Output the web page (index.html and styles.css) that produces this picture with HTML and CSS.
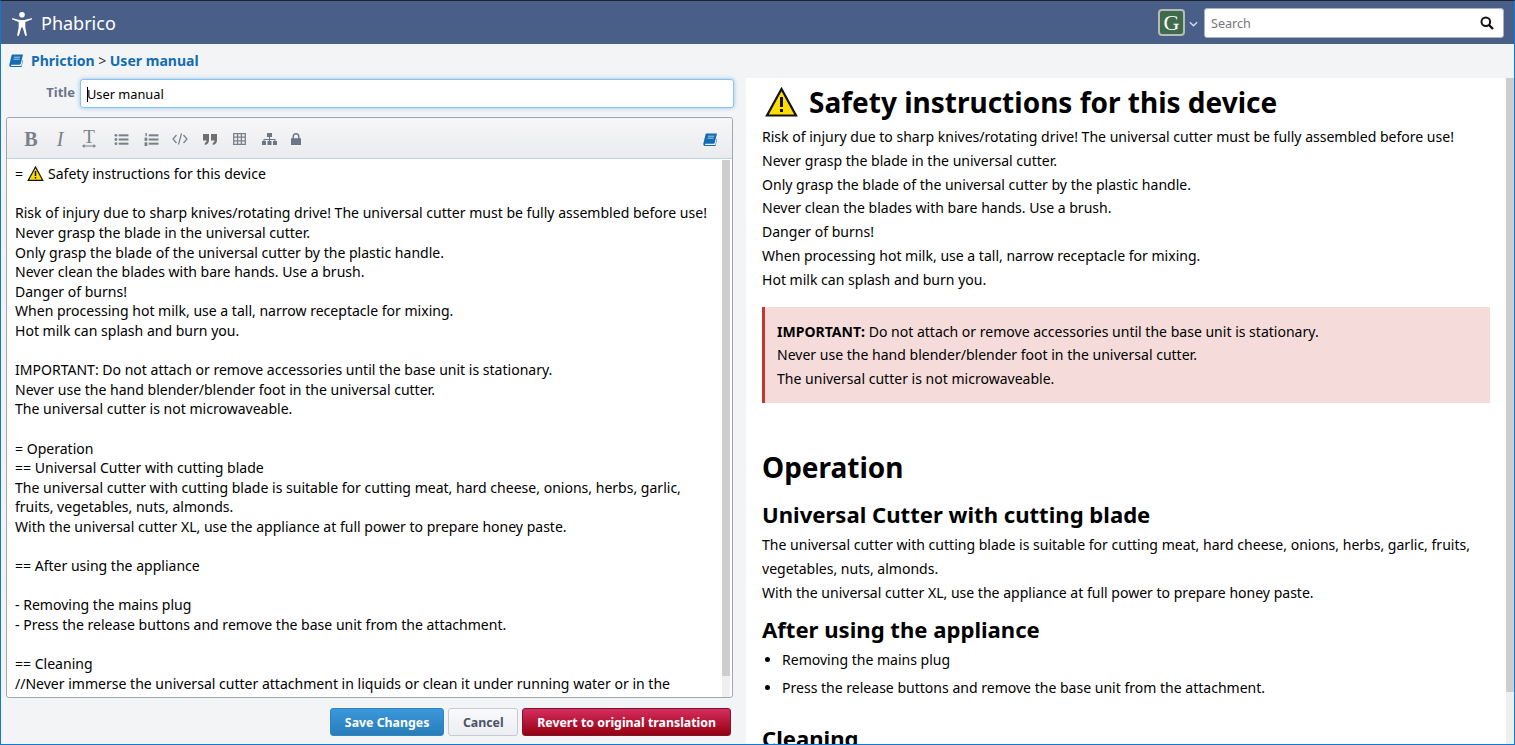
FILE: index.html
```html
<!DOCTYPE html>
<html lang="en">
<head>
  <meta charset="UTF-8">
  <title>Edit User manual</title>
  <link rel="stylesheet" href="styles.css">
</head>
<body>
  <div class="window">
    <!-- Top bar -->
    <header class="topbar">
      <a class="brand">
        <svg class="brand-icon" viewBox="0 0 20 24" width="20" height="24"><circle cx="10" cy="2.800" r="2.800" fill="#fff"/><path d="M.8 6.200c-.9-.3-1.300 1-.4 1.400L6.700 10v5l-1.500 8c-.2 1.100 1.500 1.400 1.800.3L9.300 15.500h1.400l2.300 7.800c.3 1.100 2 .8 1.800-.3l-1.500-8v-5l6.300-2.400c.9-.4.5-1.700-.4-1.400L12.500 8h-5z" fill="#fff"/></svg>
        <span>Phabrico</span>
      </a>
      <div class="topbar-right">
        <div class="avatar">G</div>
        <svg class="caret" viewBox="0 0 10 6" width="9" height="6"><path d="M1 1l4 4 4-4" fill="none" stroke="#d5ddea" stroke-width="1.500"/></svg>
        <div class="search">
          <span class="search-text">Search</span>
          <svg viewBox="0 0 14 14" width="14" height="14"><circle cx="5.800" cy="5.800" r="4.300" fill="none" stroke="#111" stroke-width="2"/><path d="M9 9l4 4" stroke="#111" stroke-width="2.400"/></svg>
        </div>
      </div>
    </header>

    <!-- Breadcrumbs -->
    <nav class="crumbs">
      <svg viewBox="0 0 14 13" width="14" height="13"><path d="M3.500 .5h10c.4 0 .5.300.4.600l-2.200 8.700c-.2.600-.5.900-1.100.9H2.800c-.8 0-1 .6-.9.900.1.300.5.500.9.500h9.500l1.500-6.500.4.400-1.700 7.100c-.1.300-.3.400-.6.400H2.500C1.200 12.900.2 12 .3 10.700L2.600 1.300c.1-.5.500-.8.900-.8z" fill="#136cb2"/><path d="M5 3.200h6.200M4.500 5.200h6.200" stroke="#cfe3f3" stroke-width=".8"/></svg>
      <a>Phriction</a><span class="sep">&gt;</span><a>User manual</a>
    </nav>

    <main class="columns">
      <!-- Editor side -->
      <section class="edit-side">
        <div class="title-row">
          <label class="title-label">Title</label>
          <div class="title-input"><span class="cursor"></span>User manual</div>
        </div>
        <div class="editor">
          <div class="toolbar">
            <span class="tool tool-b">B</span>
            <span class="tool tool-i">I</span>
            <span class="tool-t">
              <span class="tool tool-t-glyph">T</span>
              <svg viewBox="0 0 14 4" width="14" height="4"><path d="M0 2l2.500-2v1.400h9V0L14 2l-2.500 2V2.600h-9V4z" fill="#7b7f88"/></svg>
            </span>
            <svg class="tool-svg" viewBox="0 0 15 14" width="15" height="13"><g fill="#7b7f88"><circle cx="1.500" cy="2.500" r="1.500"/><circle cx="1.500" cy="7" r="1.500"/><circle cx="1.500" cy="11.500" r="1.500"/><rect x="4.500" y="1.400" width="10.500" height="2.200"/><rect x="4.500" y="5.900" width="10.500" height="2.200"/><rect x="4.500" y="10.400" width="10.500" height="2.200"/></g></svg>
            <svg class="tool-svg" viewBox="0 0 15 14" width="15" height="13"><g fill="#7b7f88"><rect x="1" y="0" width="1.500" height="3.500"/><rect x="0" y="5" width="3" height="3.500"/><rect x="0" y="10" width="3" height="4"/><rect x="4.500" y="1.400" width="10.500" height="2.200"/><rect x="4.500" y="5.900" width="10.500" height="2.200"/><rect x="4.500" y="10.400" width="10.500" height="2.200"/></g></svg>
            <svg class="tool-svg tool-code" viewBox="0 0 16 12" width="16" height="12"><path d="M4.500 2L1 6l3.500 4M11.500 2L15 6l-3.500 4M9.500.5L6.500 11.500" fill="none" stroke="#7b7f88" stroke-width="1.200"/></svg>
            <svg class="tool-svg tool-wide" viewBox="0 0 14 11" width="14" height="11"><path d="M0 0h6v6.200C6 9 4.300 10.600 1.800 10.900V8.800c1.100-.2 1.700-.9 1.700-2.300H0zM8 0h6v6.200c0 2.800-1.700 4.400-4.200 4.700V8.800c1.100-.2 1.700-.9 1.700-2.300H8z" fill="#6f6f72"/></svg>
            <svg class="tool-svg tool-wide" viewBox="0 0 13 12" width="13" height="12"><path d="M.7.700h11.600v10.600H.7zM.7 4.200h11.600M.7 7.800h11.600M4.600.7v10.600M8.400.7v10.600" fill="none" stroke="#7b7f88" stroke-width="1.300"/></svg>
            <svg class="tool-svg tool-org" viewBox="0 0 15 12" width="15" height="12"><g fill="#6d7684"><rect x="5" y="0" width="5" height="4"/><rect x="0" y="8" width="4" height="4"/><rect x="5.500" y="8" width="4" height="4"/><rect x="11" y="8" width="4" height="4"/><path d="M7 4h1v2h5.500v2h-1V7H8v1H7V7H2.500v1h-1V6H7z"/></g></svg>
            <svg class="tool-svg" viewBox="0 0 10 12" width="10" height="12"><path d="M0 5.200h1.500V3.500C1.500 1.500 3 0 5 0s3.500 1.500 3.500 3.500v1.700H10V12H0zM3 5.200h4V3.500C7 2.400 6.100 1.500 5 1.500S3 2.400 3 3.500z" fill="#6d7684"/></svg>
            <svg class="tool-help" viewBox="0 0 14 13" width="14" height="13"><path d="M3.500 .5h10c.4 0 .5.300.4.600l-2.200 8.700c-.2.600-.5.900-1.100.9H2.800c-.8 0-1 .6-.9.900.1.300.5.500.9.500h9.500l1.500-6.500.4.400-1.700 7.100c-.1.300-.3.400-.6.400H2.500C1.200 12.900.2 12 .3 10.700L2.600 1.300c.1-.5.500-.8.900-.8z" fill="#136cb2"/><path d="M5 3.200h6.200M4.500 5.200h6.200" stroke="#cfe3f3" stroke-width=".8"/></svg>
          </div>
          <div class="source-wrap">
            <div class="source">
              <div class="source-head"><span>=</span><svg class="warn-small" viewBox="0 0 32 30" width="17" height="15"><path d="M16 2L1.500 28.500h29z" fill="#ffdd00" stroke="#111" stroke-width="2.500" stroke-linejoin="miter"/><rect x="14.500" y="10" width="3" height="10" fill="#111"/><rect x="14.500" y="22" width="3" height="3" fill="#111"/></svg><span>Safety instructions for this device</span></div>
              <div class="source-text">
Risk of injury due to sharp knives/rotating drive! The universal cutter must be fully assembled before use!
Never grasp the blade in the universal cutter.
Only grasp the blade of the universal cutter by the plastic handle.
Never clean the blades with bare hands. Use a brush.
Danger of burns!
When processing hot milk, use a tall, narrow receptacle for mixing.
Hot milk can splash and burn you.

IMPORTANT: Do not attach or remove accessories until the base unit is stationary.
Never use the hand blender/blender foot in the universal cutter.
The universal cutter is not microwaveable.

= Operation
== Universal Cutter with cutting blade
The universal cutter with cutting blade is suitable for cutting meat, hard cheese, onions, herbs, garlic, fruits, vegetables, nuts, almonds.
With the universal cutter XL, use the appliance at full power to prepare honey paste.

== After using the appliance

- Removing the mains plug
- Press the release buttons and remove the base unit from the attachment.

== Cleaning
//Never immerse the universal cutter attachment in liquids or clean it under running water or in the</div>
            </div>
            <div class="scrollbar"><div class="thumb thumb-source"></div></div>
          </div>
        </div>
        <div class="actions">
          <button class="btn btn-blue">Save Changes</button>
          <button class="btn btn-grey">Cancel</button>
          <button class="btn btn-red">Revert to original translation</button>
        </div>
      </section>

      <!-- Preview side -->
      <section class="preview">
        <div class="preview-body">
          <h1 class="h-first"><svg class="warn-big" viewBox="0 0 32 30" width="33" height="30"><path d="M16 2L1.500 28.500h29z" fill="#ffdd00" stroke="#111" stroke-width="2.200" stroke-linejoin="miter"/><rect x="14.500" y="10" width="3" height="10" fill="#111"/><rect x="14.500" y="22" width="3" height="3" fill="#111"/></svg>Safety instructions for this device</h1>
          <p>Risk of injury due to sharp knives/rotating drive! The universal cutter must be fully assembled before use!<br>Never grasp the blade in the universal cutter.<br>Only grasp the blade of the universal cutter by the plastic handle.<br>Never clean the blades with bare hands. Use a brush.<br>Danger of burns!<br>When processing hot milk, use a tall, narrow receptacle for mixing.<br>Hot milk can splash and burn you.</p>
          <div class="notice"><b>IMPORTANT:</b> Do not attach or remove accessories until the base unit is stationary.<br>Never use the hand blender/blender foot in the universal cutter.<br>The universal cutter is not microwaveable.</div>
          <h1 class="h-op">Operation</h1>
          <h2 class="h-cutter">Universal Cutter with cutting blade</h2>
          <p>The universal cutter with cutting blade is suitable for cutting meat, hard cheese, onions, herbs, garlic, fruits, vegetables, nuts, almonds.<br>With the universal cutter XL, use the appliance at full power to prepare honey paste.</p>
          <h2 class="h-after">After using the appliance</h2>
          <ul>
            <li>Removing the mains plug</li>
            <li>Press the release buttons and remove the base unit from the attachment.</li>
          </ul>
          <h2 class="h-clean">Cleaning</h2>
        </div>
        <div class="scrollbar"><div class="thumb thumb-preview"></div></div>
      </section>
    </main>
  </div>
</body>
</html>
```
FILE: styles.css
```css
html, body {
  margin: 0;
  padding: 0;
  height: 100%;
  overflow: hidden;
}
body {
  font-family: "Noto Sans", sans-serif;
  font-size: 14.04px;
  color: #000;
}
.window {
  height: 100vh;
  box-sizing: border-box;
  display: flex;
  flex-direction: column;
  border: 1px solid #0f7ad6;
  border-top: 1px solid #1c2330;
  background: #f3f4f6;
}
.topbar {
  height: 43px;
  flex: none;
  display: flex;
  align-items: center;
  justify-content: space-between;
  background: #4a5f88;
}
.brand {
  display: flex;
  align-items: center;
  color: #fff;
  font-size: 18px;
  padding-left: 11px;
}
.brand-icon {
  margin: 3px 9px 0 0;
}
.topbar-right {
  display: flex;
  align-items: center;
  margin-right: 10px;
}
.avatar {
  width: 27px;
  height: 27px;
  box-sizing: border-box;
  border: 2px solid #b5bcb5;
  border-radius: 4px;
  background: #3f6b4c;
  color: #fff;
  font-family: "Liberation Serif", serif;
  font-size: 22px;
  line-height: 23px;
  text-align: center;
}
.caret {
  margin: 2px 6px 0 4px;
}
.search {
  width: 300px;
  height: 30px;
  box-sizing: border-box;
  display: flex;
  align-items: center;
  justify-content: space-between;
  padding: 0 9px 0 6px;
  background: #fff;
  border: 1px solid #a9b4c4;
  border-radius: 3px;
}
.search-text {
  padding-top: 2px;
  font-size: 12.6px;
  color: #777;
}
.crumbs {
  height: 33px;
  padding-bottom: 1px;
  flex: none;
  display: flex;
  align-items: center;
  padding-left: 8px;
  font-weight: bold;
  color: #136cb2;
}
.crumbs svg {
  margin-right: 8px;
}
.sep {
  font-weight: normal;
  color: #333;
  margin: 0 3.5px;
}
.columns {
  flex: 1;
  min-height: 0;
  display: flex;
}
.edit-side {
  width: 745px;
  flex: none;
  padding: 0 13px 0 5px;
  box-sizing: border-box;
  display: flex;
  flex-direction: column;
}
.title-row {
  display: flex;
  align-items: center;
  height: 31px;
  flex: none;
  margin-right: -1px;
}
.title-label {
  width: 69px;
  margin-top: -3px;
  text-align: right;
  font-size: 13px;
  font-weight: bold;
  color: #6b748c;
}
.title-input {
  flex: 1;
  margin-left: 5px;
  height: 29px;
  box-sizing: border-box;
  line-height: 28px;
  padding-left: 6px;
  font-size: 12.8px;
  background: #fff;
  border: 1px solid #8cc2ee;
  border-radius: 3px;
  box-shadow: 0 0 4px rgba(82, 168, 236, .6);
}
.cursor {
  display: inline-block;
  width: 1px;
  height: 15px;
  margin-right: -1px;
  background: #000;
  vertical-align: -3px;
}
.editor {
  height: 581px;
  flex: none;
  margin-top: 8px;
  box-sizing: border-box;
  display: flex;
  flex-direction: column;
  border: 1px solid #a1a6b0;
  border-radius: 3px;
  background: #fff;
}
.toolbar {
  height: 41px;
  flex: none;
  box-sizing: border-box;
  display: flex;
  align-items: center;
  padding: 2px 15px 0 17px;
  background: linear-gradient(#f7f7f9, #eaebee);
  border-bottom: 1px solid #b8d4ea;
  border-radius: 3px 3px 0 0;
}
.tool {
  font-family: "Liberation Serif", serif;
  font-size: 20px;
  line-height: 20px;
  text-align: center;
  color: #7b7f88;
}
.tool-b {
  width: 14px;
  margin-right: 15px;
  font-weight: bold;
}
.tool-i {
  width: 14px;
  margin-right: 15px;
  font-style: italic;
}
.tool-t {
  width: 14px;
  margin-right: 18px;
  display: flex;
  flex-direction: column;
  align-items: center;
}
.tool-t-glyph {
  height: 13px;
  line-height: 14px;
  font-size: 19px;
  margin-bottom: 1px;
}
.tool-svg {
  margin-right: 15px;
}
.tool-code {
  margin-left: -2px;
}
.tool-wide {
  margin-right: 16px;
}
.tool-org {
  margin-right: 14px;
}
.tool-help {
  margin-left: auto;
}
.source-wrap {
  flex: 1;
  min-height: 0;
  display: flex;
  padding: 1px 2px 0 0;
}
.source {
  flex: 1;
  min-width: 0;
  overflow: hidden;
  box-sizing: border-box;
  padding: 4.2px 12px 0 8px;
  line-height: 19.600px;
}
.source-head {
  display: flex;
  align-items: center;
  height: 19.600px;
}
.source-text {
  white-space: pre-wrap;
}
.warn-small {
  margin: 0 4px;
}
.scrollbar {
  width: 8px;
  flex: none;
  background: #efefef;
}
.thumb {
  background: #cdcdcd;
}
.thumb-source {
  height: 516px;
}
.thumb-preview {
  height: 614px;
}
.actions {
  display: flex;
  justify-content: flex-end;
  gap: 4px;
  margin-top: 10px;
  margin-right: 2px;
}
.btn {
  height: 28px;
  padding: 0 14px;
  box-sizing: border-box;
  font-family: "Noto Sans", sans-serif;
  font-size: 12.35px;
  font-weight: bold;
  border-radius: 3px;
  color: #fff;
}
.btn-blue {
  background: linear-gradient(#3a98dc, #2a7cb8);
  border: 1px solid #2d84c2;
}
.btn-grey {
  padding: 0 13.5px;
  background: linear-gradient(#fafafc, #eceef2);
  border: 1px solid #c5cad4;
  color: #4b5464;
}
.btn-red {
  background: linear-gradient(#d62d5f, #94000f);
  border: 1px solid #7d1530;
}
.preview {
  flex: 1;
  min-width: 0;
  display: flex;
  background: #fff;
}
.preview-body {
  flex: 1;
  min-width: 0;
  overflow: hidden;
  padding: 0 16px;
  line-height: 23.800px;
}
.preview p {
  margin: 0;
}
.preview h1 {
  margin: 0;
  font-size: 28px;
  line-height: 36px;
  font-weight: bold;
}
.preview h2 {
  margin: 0;
  font-size: 22.1px;
  line-height: 28px;
  font-weight: bold;
}
.preview .h-first {
  display: flex;
  align-items: center;
  padding-top: 6px;
  margin-bottom: 5px;
}
.warn-big {
  margin: 0 11px 0 3px;
}
.notice {
  margin: 15px 0 0;
  padding: 13px 12px 12px;
  background: #f5dcdb;
  border-left: 3px solid #c0392b;
}
.preview .h-op {
  margin-top: 46px;
}
.preview .h-cutter {
  margin-top: 15px;
  margin-bottom: 5px;
}
.preview .h-after {
  margin-top: 11px;
}
.preview ul {
  margin: 5px 0 0;
  padding-left: 20px;
}
.preview li {
  margin-bottom: 4px;
}
.preview .h-clean {
  margin-top: 24px;
}
```
